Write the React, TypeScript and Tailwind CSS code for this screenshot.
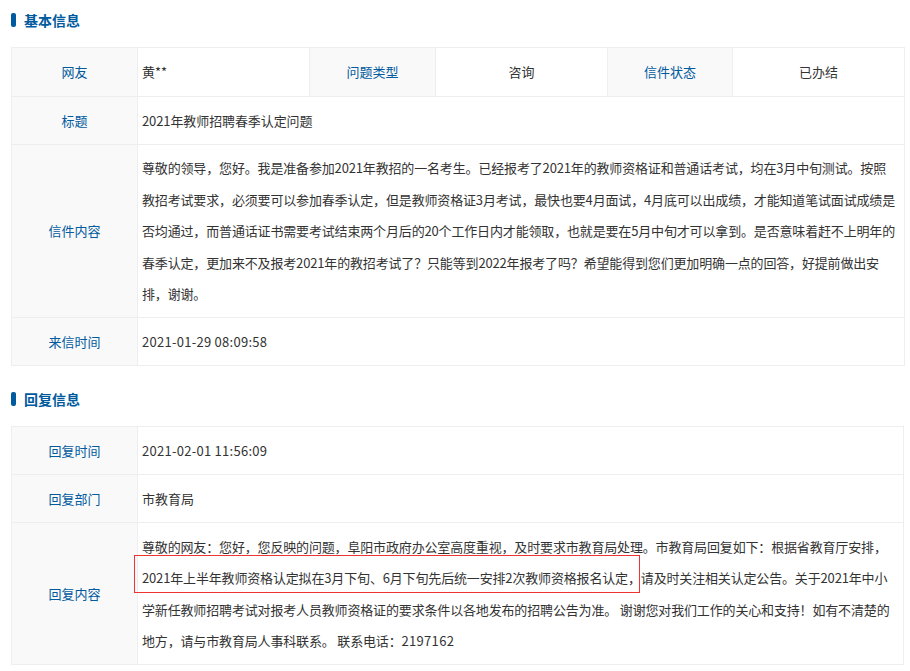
const font = { fontFamily: '"Noto Sans CJK SC", sans-serif' };

function Heading({ children }: { children: string }) {
  return (
    <div className="flex h-[40px] items-center gap-[8px] pl-[11px]">
      <span className="h-[14px] w-[5px] rounded-[2px] bg-[#005a9e]" />
      <span className="text-[14px] font-bold leading-[20px] text-[#005a9e]">{children}</span>
    </div>
  );
}

function Label({ children, rowH }: { children: string; rowH?: string }) {
  return (
    <th className={`border border-[#eeeeee] bg-[#f9f9f9] p-0 text-center text-[13px] font-normal text-[#005a9e] ${rowH ?? ""}`}>
      {children}
    </th>
  );
}

export default function App() {
  return (
    <div className="h-[671px] w-[910px] overflow-hidden bg-white text-[13px] text-[#333333]" style={font}>
      <Heading>基本信息</Heading>
      <div className="mt-[7px] pl-[11px] pr-[5px]">
        <table className="w-[893px] table-fixed border-collapse">
          <colgroup>
            <col className="w-[126px]" />
            <col className="w-[172px]" />
            <col className="w-[126px]" />
            <col className="w-[172px]" />
            <col className="w-[125px]" />
            <col className="w-[172px]" />
          </colgroup>
          <tbody>
            <tr>
              <Label rowH="h-[49px]">网友</Label>
              <td className="border border-[#eeeeee] pl-[4px]">黄**</td>
              <Label>问题类型</Label>
              <td className="border border-[#eeeeee] text-center">咨询</td>
              <Label>信件状态</Label>
              <td className="border border-[#eeeeee] text-center">已办结</td>
            </tr>
            <tr>
              <Label rowH="h-[48px]">标题</Label>
              <td colSpan={5} className="border border-[#eeeeee] pl-[4px] tracking-[-0.1px]">2021年教师招聘春季认定问题</td>
            </tr>
            <tr>
              <Label rowH="h-[173px]">信件内容</Label>
              <td colSpan={5} className="whitespace-nowrap border border-[#eeeeee] pl-[4px] leading-[31.6px] tracking-[-0.16px]">
                尊敬的领导，您好。我是准备参加2021年教招的一名考生。已经报考了2021年的教师资格证和普通话考试，均在3月中旬测试。按照<br />
                教招考试要求，必须要可以参加春季认定，但是教师资格证3月考试，最快也要4月面试，4月底可以出成绩，才能知道笔试面试成绩是<br />
                否均通过，而普通话证书需要考试结束两个月后的20个工作日内才能领取，也就是要在5月中旬才可以拿到。是否意味着赶不上明年的<br />
                春季认定，更加来不及报考2021年的教招考试了？只能等到2022年报考了吗？希望能得到您们更加明确一点的回答，好提前做出安<br />
                排，谢谢。
              </td>
            </tr>
            <tr>
              <Label rowH="h-[48px]">来信时间</Label>
              <td colSpan={5} className="border border-[#eeeeee] pl-[4px] tracking-[0.27px]">2021-01-29 08:09:58</td>
            </tr>
          </tbody>
        </table>
      </div>
      <div className="mt-[13px]">
        <Heading>回复信息</Heading>
      </div>
      <div className="mt-[7px] pl-[11px] pr-[5px]">
        <table className="w-[893px] table-fixed border-collapse">
          <colgroup>
            <col className="w-[126px]" />
            <col />
          </colgroup>
          <tbody>
            <tr>
              <Label rowH="h-[48px]">回复时间</Label>
              <td className="border border-[#eeeeee] pl-[4px] tracking-[0.27px]">2021-02-01 11:56:09</td>
            </tr>
            <tr>
              <Label rowH="h-[48px]">回复部门</Label>
              <td className="border border-[#eeeeee] pl-[4px]">市教育局</td>
            </tr>
            <tr>
              <Label rowH="h-[142px]">回复内容</Label>
              <td className="relative whitespace-nowrap border border-[#eeeeee] pl-[4px] leading-[31.4px] tracking-[-0.16px]">
                尊敬的网友：您好，您反映的问题，阜阳市政府办公室高度重视，及时要求市教育局处理。市教育局回复如下：根据省教育厅安排，<br />
                2021年上半年教师资格认定拟在3月下旬、6月下旬先后统一安排2次教师资格报名认定，请及时关注相关认定公告。关于2021年中小<br />
                学新任教师招聘考试对报考人员教师资格证的要求条件以各地发布的招聘公告为准。 谢谢您对我们工作的关心和支持！如有不清楚的<br />
                地方，请与市教育局人事科联系。 联系电话：<span className="tracking-[0.3px]">2197162</span>
                <span className="absolute left-[-4px] top-[32px] h-[38px] w-[506px] border border-[#ee3333]" />
              </td>
            </tr>
          </tbody>
        </table>
      </div>
    </div>
  );
}
